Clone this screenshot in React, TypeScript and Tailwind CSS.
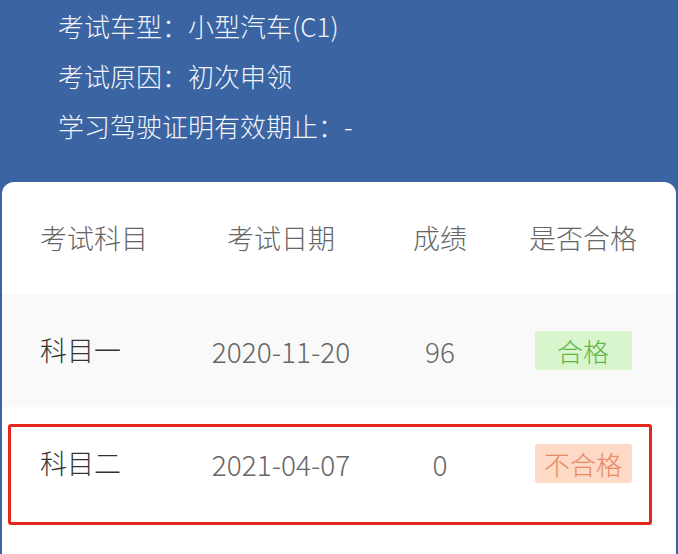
import React from "react";

const font = { fontFamily: '"Noto Sans CJK SC", "Noto Sans", sans-serif' };

export default function App() {
  return (
    <div
      className="relative w-[678px] h-[554px] overflow-hidden bg-[#3b64a3] font-light"
      style={font}
    >
      <div className="pl-[58px] pt-[1px] text-[26px] leading-[50px] text-[#f2f5fa]">
        <div>考试车型：小型汽车(C1)</div>
        <div>考试原因：初次申领</div>
        <div>学习驾驶证明有效期止：-</div>
      </div>
      <div className="absolute left-[2px] right-[2px] top-[182px] bottom-0 rounded-t-[12px] bg-white">
        <div className="grid grid-cols-[158px_166px_152px_134px] items-center h-[112px] pl-[38px] text-[27px] text-[#666666]">
          <div>考试科目</div>
          <div className="text-center">考试日期</div>
          <div className="text-center">成绩</div>
          <div className="text-center">是否合格</div>
        </div>
        <div className="grid grid-cols-[158px_166px_152px_134px] items-center h-[113px] pl-[38px] bg-[#f9f9f9] text-[27px]">
          <div className="text-[#333333]">科目一</div>
          <div className="text-center text-[28px] text-[#666666]">2020-11-20</div>
          <div className="text-center text-[28px] text-[#666666]">96</div>
          <div className="flex justify-center">
            <span className="flex items-center justify-center w-[97px] h-[39px] rounded-[3px] bg-[#d8f5cd] text-[26px] text-[#5fb548]">
              合格
            </span>
          </div>
        </div>
        <div className="grid grid-cols-[158px_166px_152px_134px] items-center h-[113px] pl-[38px] text-[27px]">
          <div className="text-[#333333]">科目二</div>
          <div className="text-center text-[28px] text-[#666666]">2021-04-07</div>
          <div className="text-center text-[28px] text-[#666666]">0</div>
          <div className="flex justify-center">
            <span className="flex items-center justify-center w-[97px] h-[39px] rounded-[3px] bg-[#fdd9c6] text-[26px] text-[#e58a62]">
              不合格
            </span>
          </div>
        </div>
      </div>
      <div className="absolute left-[8px] top-[424px] w-[644px] h-[101px] border-[3px] border-[#e3261c] rounded-[3px]" />
    </div>
  );
}
